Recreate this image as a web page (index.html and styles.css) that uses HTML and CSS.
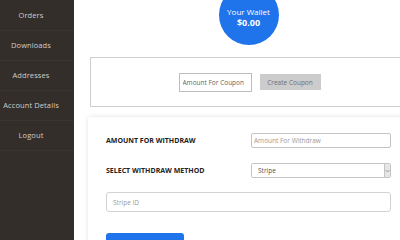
FILE: index.html
```html
<!DOCTYPE html>
<html>

<head>
  <title>My Wallet</title>
  <meta name="viewport" content="width=device-width, initial-scale=1.0">
  <link rel="stylesheet" href="styles.css">
</head>

<body>
  <div class="container">
    <div class="sidebar">
      <a class="nav-item" href="#">Orders</a>
      <a class="nav-item" href="#">Downloads</a>
      <a class="nav-item" href="#">Addresses</a>
      <a class="nav-item" href="#">Account Details</a>
      <a class="nav-item" href="#">Logout</a>
    </div>

    <div class="main">
      <div class="wallet">
        <span class="wallet-title">Your Wallet</span>
        <span class="wallet-amount">$0.00</span>
      </div>

      <div class="coupon-card">
        <input class="coupon-input" type="text" placeholder="Amount For Coupon">
        <button class="coupon-button">Create Coupon</button>
      </div>

      <div class="withdraw-card">
        <div class="form-row">
          <label class="form-label">Amount For Withdraw</label>
          <input class="form-input" type="text" placeholder="Amount For Withdraw">
        </div>
        <div class="form-row">
          <label class="form-label">Select Withdraw Method</label>
          <div class="select-box">
            <select class="form-select">
              <option>Stripe</option>
              <option>PayPal</option>
            </select>
            <span class="select-arrow">
              <svg width="5" height="4" viewBox="0 0 5 4"><path d="M0.5 1 L2.5 3 L4.5 1" fill="none" stroke="#888" stroke-width="0.8"/></svg>
            </span>
          </div>
        </div>
        <input class="stripe-input" type="text" placeholder="Stripe ID">
        <button class="withdraw-button">Withdraw</button>
      </div>
    </div>
  </div>
</body>
</html>
```

FILE: styles.css
```css
/* variables */
:root {
  --sidebar-bg: #332e2a;
  --sidebar-text: #d2cdc8;
  --blue: #1f74ec;
  --border: #cfcfcf;
}

/* global */
* {
  box-sizing: border-box;
  font-family: 'Open Sans', 'Liberation Sans', sans-serif;
}

body,
html {
  margin: 0;
  padding: 0;
  overflow: hidden;
  background: #fff;
}

.container {
  display: flex;
  width: 400px;
  height: 240px;
  overflow: hidden;
}

/* sidebar */
.sidebar {
  flex: 0 0 74px;
  background: var(--sidebar-bg);
  display: flex;
  flex-direction: column;
  padding-top: 1px;
}

.nav-item {
  flex: 0 0 30px;
  line-height: 29px;
  text-align: center;
  padding-right: 12px;
  font-size: 7.5px;
  color: var(--sidebar-text);
  text-decoration: none;
  border-bottom: 1px solid #3a3531;
  letter-spacing: 0.1px;
  white-space: nowrap;
}

/* main */
.main {
  flex: 0 0 321px;
  margin-left: 14px;
  display: flex;
  flex-direction: column;
  align-items: center;
}

.wallet {
  flex: 0 0 60px;
  width: 60px;
  margin-top: -15px;
  border-radius: 50%;
  background: var(--blue);
  color: #fff;
  display: flex;
  flex-direction: column;
  justify-content: flex-end;
  align-items: center;
  padding-bottom: 17px;
}

.wallet-title {
  font-size: 8px;
  line-height: 11px;
}

.wallet-amount {
  font-size: 9px;
  font-weight: bold;
  line-height: 11px;
}

/* coupon */
.coupon-card {
  align-self: stretch;
  margin: 12px 0 0 2px;
  flex: 0 0 50px;
  border: 1px solid var(--border);
  display: flex;
  justify-content: center;
  align-items: center;
  gap: 8px;
}

.coupon-input {
  width: 73px;
  height: 19px;
  border: 1px solid #bdbdbd;
  padding: 0 3px;
  font-size: 6.5px;
  outline: none;
}

.coupon-input::placeholder {
  color: #666;
}

.coupon-button {
  width: 61px;
  height: 16px;
  border: none;
  background: #cccccc;
  color: #6f6f6f;
  font-size: 6.5px;
  padding: 0;
}

/* withdraw */
.withdraw-card {
  align-self: stretch;
  flex: 0 0 150px;
  margin-top: 10px;
  padding: 16px 18px 0 18px;
  box-shadow: 0 0 5px rgba(0, 0, 0, 0.12);
  border-radius: 2px;
  display: flex;
  flex-direction: column;
}

.form-row {
  display: flex;
  align-items: center;
  flex: 0 0 15px;
}

.form-row + .form-row {
  margin-top: 15px;
}

.form-label {
  flex: 0 0 145px;
  font-size: 7px;
  font-weight: bold;
  text-transform: uppercase;
  color: #222;
}

.form-input {
  flex: 1;
  height: 15px;
  border: 1px solid #c4c4c4;
  border-radius: 2px;
  padding: 0 2px;
  font-size: 6.5px;
  outline: none;
}

.form-input::placeholder,
.stripe-input::placeholder {
  color: #9a9a9a;
}

.select-box {
  flex: 1;
  height: 15px;
  display: flex;
  border: 1px solid #c4c4c4;
  border-radius: 2px;
  overflow: hidden;
}

.form-select {
  flex: 1;
  appearance: none;
  border: none;
  background: #fff;
  font-size: 6.5px;
  color: #555;
  padding: 0 6px;
  outline: none;
}

.select-arrow {
  flex: 0 0 6px;
  background: #e6e6e6;
  border-left: 1px solid #c4c4c4;
  display: flex;
  align-items: center;
  justify-content: center;
}

.stripe-input {
  flex: 0 0 20px;
  margin-top: 14px;
  border: 1px solid #d2d2d2;
  border-radius: 3px;
  padding: 0 6px;
  font-size: 6.5px;
  outline: none;
}

.withdraw-button {
  flex: 0 0 26px;
  margin-top: 21px;
  width: 78px;
  border: none;
  border-radius: 3px;
  background: var(--blue);
  color: #fff;
  font-size: 7px;
}
```
